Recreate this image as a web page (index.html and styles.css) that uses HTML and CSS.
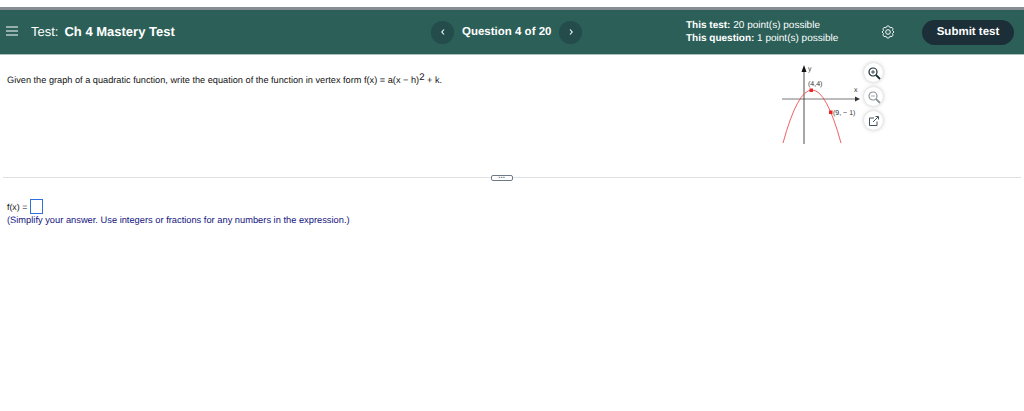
FILE: index.html
```html
<!DOCTYPE html>
<html lang="en">
<head>
<meta charset="utf-8">
<title>Test: Ch 4 Mastery Test</title>
<link rel="stylesheet" href="styles.css">
</head>
<body>
<header class="bar">
  <div class="bar-left">
    <svg class="menu" width="12" height="10" viewBox="0 0 12 10"><path d="M0 1h12M0 5h12M0 9h12" stroke="#fff" stroke-width="1.1"/></svg>
    <span class="title">Test:</span><b class="title-name">Ch 4 Mastery Test</b>
  </div>
  <div class="bar-mid">
    <span class="nav"><svg width="6" height="8" viewBox="0 0 6 8"><path d="M4 1.500 1.800 4 4 6.500" fill="none" stroke="#fff" stroke-width="1.1"/></svg></span>
    <b class="q">Question 4 of 20</b>
    <span class="nav"><svg width="6" height="8" viewBox="0 0 6 8"><path d="M2 1.500 4.200 4 2 6.500" fill="none" stroke="#fff" stroke-width="1.1"/></svg></span>
  </div>
  <div class="points">
    <div><b>This test:</b> 20 point(s) possible</div>
    <div><b>This question:</b> 1 point(s) possible</div>
  </div>
  <svg class="gear" width="14" height="14" viewBox="0 0 14 14"><path d="M5.500 1.500 7 .8 8.500 1.500 9 2.800 11 2.400 12 3.800 11.500 5.500 13 7 11.500 8.500 12 10.200 11 11.600 9 11.200 8.500 12.500 7 13.200 5.500 12.500 5 11.200 3 11.600 2 10.200 2.500 8.500 1 7 2.500 5.500 2 3.800 3 2.400 5 2.800Z" fill="none" stroke="#fff" stroke-width=".9" stroke-linejoin="round"/><circle cx="7" cy="7" r="2.300" fill="none" stroke="#fff" stroke-width="1"/></svg>
  <span class="submit">Submit test</span>
</header>
<main>
  <section class="question">
    <p class="prompt">Given the graph of a quadratic function, write the equation of the function in vertex form f(x) = a(x − h)<sup>2</sup> + k.</p>
    <div class="figure">
      <svg class="graph" width="82" height="90" viewBox="0 0 82 90">
        <path d="M2 44H78" stroke="#555" stroke-width=".8"/>
        <path d="M75 41.500 80 44 75 46.500Z" fill="#333"/>
        <path d="M24 13V89" stroke="#222" stroke-width=".8"/>
        <path d="M21.500 17 24 10 26.500 17Z" fill="#111"/>
        <path d="M3 88Q32 -18 61 88" fill="none" stroke="#e8383a" stroke-width=".8"/>
        <rect x="29.500" y="33.500" width="3.500" height="3.500" fill="#e8262a"/>
        <rect x="49" y="55.500" width="3.500" height="3.500" fill="#e8262a"/>
        <text x="28" y="31" class="lbl">(4,4)</text>
        <text x="53" y="60" class="lbl">(9, − 1)</text>
        <text x="28" y="16" class="lbl">y</text>
        <text x="74" y="37" class="lbl">x</text>
      </svg>
      <div class="tools">
        <span class="tool"><svg width="14" height="14" viewBox="0 0 14 14"><circle cx="6" cy="6" r="4" fill="none" stroke="#1c2b33" stroke-width="1.200"/><path d="M9 9 13 13" stroke="#1c2b33" stroke-width="1.800"/><path d="M4 6H8M6 4V8" stroke="#1c2b33" stroke-width=".8"/></svg></span>
        <span class="tool"><svg width="14" height="14" viewBox="0 0 14 14"><circle cx="6" cy="6" r="4" fill="none" stroke="#8b9499" stroke-width="1.200"/><path d="M9 9 13 13" stroke="#8b9499" stroke-width="1.800"/><path d="M4 6H8" stroke="#8b9499" stroke-width=".8"/></svg></span>
        <span class="tool"><svg width="12" height="12" viewBox="0 0 12 12"><path d="M6 3H1.500V10.500H9V6.500" fill="none" stroke="#30404a" stroke-width=".9"/><path d="M5 7 10 2M7.500 1.500H10.500V4.500" fill="none" stroke="#30404a" stroke-width=".9"/></svg></span>
      </div>
    </div>
  </section>
  <div class="divider"><span class="handle">•••</span></div>
  <section class="answer">
    <div class="eq"><span>f(x) =</span><span class="input"></span></div>
    <p class="hint">(Simplify your answer. Use integers or fractions for any numbers in the expression.)</p>
  </section>
</main>
</body>
</html>
```

FILE: styles.css
```css
* { box-sizing: border-box; }
html, body { margin: 0; padding: 0; }
body {
  width: 1024px;
  height: 411px;
  overflow: hidden;
  background: #fff;
  font-family: "Liberation Sans", Arial, sans-serif;
  color: #111;
  padding-top: 7px;
  text-rendering: geometricPrecision;
}
.bar {
  height: 48px;
  display: flex;
  align-items: center;
  background: #2b5f58;
  border-top: 3px solid #868c92;
  border-bottom: 1px solid #a9bdb9;
  color: #fff;
}
.bar-left {
  width: 431px;
  display: flex;
  align-items: center;
  padding: 0 0 2px 6px;
  font-size: 13px;
}
.menu { margin-right: 13px; }
.title { margin-right: 6px; }
.title-name { font-weight: 700; }
.bar-mid {
  width: 234px;
  display: flex;
  align-items: center;
  font-size: 11.500px;
}
.nav {
  width: 23px;
  height: 23px;
  border-radius: 50%;
  background: #234c4b;
  display: flex;
  align-items: center;
  justify-content: center;
}
.q { margin: 0 8px; padding-bottom: 1px; white-space: nowrap; }
.points {
  width: 197px;
  padding: 0 0 1px 21px;
  font-size: 10px;
  line-height: 13px;
  white-space: nowrap;
}
.gear { margin: 0 27px 1px 19px; }
.submit {
  width: 92px;
  height: 25px;
  border-radius: 13px;
  background: #1c2f38;
  font-size: 11.500px;
  font-weight: 700;
  display: flex;
  align-items: center;
  justify-content: center;
}
.question {
  height: 122px;
  display: flex;
  justify-content: space-between;
  padding: 0 0 0 7px;
}
.prompt {
  margin: 19px 0 0;
  font-size: 9.200px;
  line-height: 12px;
  color: #111;
}
.prompt sup { font-size: 9.500px; line-height: 0; vertical-align: 3px; }
.figure {
  width: 244px;
  display: flex;
}
.graph { flex: none; }
.lbl { font-size: 7px; fill: #333; font-family: "Liberation Sans", Arial, sans-serif; }
.tools {
  display: flex;
  flex-direction: column;
  gap: 5px;
  margin: 8px 0 0 2px;
}
.tool {
  width: 19px;
  height: 19px;
  border-radius: 50%;
  background: #fff;
  box-shadow: 0 0 4px rgba(0, 0, 0, .25);
  display: flex;
  align-items: center;
  justify-content: center;
}
.divider {
  height: 1px;
  margin: 0 3px;
  background: #dfe1e3;
  display: flex;
  align-items: center;
  justify-content: center;
}
.handle {
  width: 22px;
  height: 6px;
  margin-right: 20px;
  border: 1px solid #6d7a88;
  border-radius: 2px;
  background: #fff;
  color: #5d6a78;
  font-size: 5px;
  line-height: 4px;
  letter-spacing: .5px;
  text-align: center;
}
.answer { padding: 21px 0 0 7px; }
.eq {
  display: flex;
  align-items: center;
  gap: 3px;
  font-size: 8.800px;
  height: 15px;
}
.input {
  width: 13px;
  height: 15px;
  border: 1px solid #2f6fe0;
  background: #fff;
}
.hint {
  margin: 1px 0 0;
  font-size: 9.300px;
  line-height: 11px;
  color: #14147e;
}
```
